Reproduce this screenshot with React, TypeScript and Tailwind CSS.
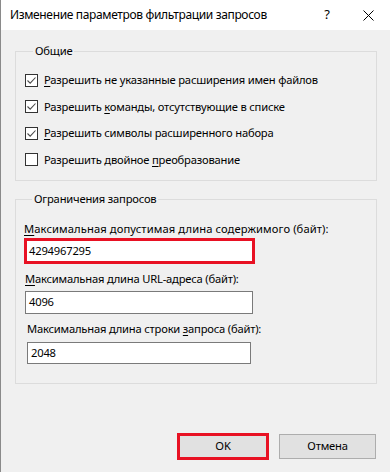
import React from 'react';

const FONT = { fontFamily: '"Noto Sans", "Open Sans", sans-serif' };

const Check: React.FC<{ checked: boolean }> = ({ checked }) => (
  <span className="w-[13px] h-[13px] border border-[#333333] bg-white flex items-center justify-center shrink-0">
    {checked && (
      <svg width="11" height="11" viewBox="0 0 11 11">
        <path d="M1.5 5.5 L4.2 8.2 L9.5 2.5" fill="none" stroke="#4a4a4a" strokeWidth="1.1" />
      </svg>
    )}
  </span>
);

const OPTIONS: { before: string; key: string; after: string; checked: boolean }[] = [
  { before: '', key: 'Р', after: 'азрешить не указанные расширения имен файлов', checked: true },
  { before: 'Разрешить ', key: 'к', after: 'оманды, отсутствующие в списке', checked: true },
  { before: '', key: 'Р', after: 'азрешить символы расширенного набора', checked: true },
  { before: 'Разрешить двойное ', key: 'п', after: 'реобразование', checked: false },
];

const App: React.FC = () => {
  return (
    <div className="w-[390px] h-[472px] bg-[#f0f0f0] border-l border-[#8a8a8a] text-[11.2px] tracking-[-0.2px] text-black flex flex-col overflow-hidden" style={FONT}>
      {/* Title bar */}
      <div className="h-[30px] bg-white flex items-center shrink-0">
        <span className="ml-[9px] flex-1 text-[12px] tracking-[-0.35px]">Изменение параметров фильтрации запросов</span>
        <span className="w-[20px] text-center text-[13px] mr-[26px]">?</span>
        <svg width="11" height="11" viewBox="0 0 11 11" className="mr-[16px]">
          <path d="M0.5 0.5 L10.5 10.5 M10.5 0.5 L0.5 10.5" stroke="#000" strokeWidth="1" />
        </svg>
      </div>

      {/* Общие */}
      <fieldset className="mt-[13px] ml-[14px] w-[362px] h-[138px] border border-[#dcdcdc] pl-[9px]">
        <legend className="ml-[8px] px-[2px] leading-[16px]">Общие</legend>
        <div className="pt-[8px] flex flex-col">
          {OPTIONS.map((o, i) => (
            <div key={i} className="h-[26.5px] flex items-center gap-[6px]">
              <Check checked={o.checked} />
              <span className="leading-[16px]">
                {o.before}
                <span className="underline underline-offset-2">{o.key}</span>
                {o.after}
              </span>
            </div>
          ))}
        </div>
      </fieldset>

      {/* Ограничения запросов */}
      <fieldset className="mt-[10px] ml-[14px] w-[362px] h-[193px] border border-[#dcdcdc] pl-[8px]">
        <legend className="ml-[8px] px-[2px] leading-[16px]">Ограничения запросов</legend>
        <div className="pt-[14px] flex flex-col">
          <div className="leading-[16px] tracking-[0.1px]">
            <span className="underline underline-offset-2">М</span>аксимальная допустимая длина содержимого (байт):
          </div>
          <div className="mt-[1px] w-[231px] h-[26px] border-[3px] border-[#e81123] bg-white flex items-center pl-[2px]">
            4294967295
          </div>
          <div className="mt-[7px] leading-[16px] ml-[1px]">
            <span className="underline underline-offset-2">М</span>аксимальная длина URL-адреса (байт):
          </div>
          <div className="mt-[4px] ml-[1px] w-[228px] h-[23px] border border-[#7a7a7a] bg-white flex items-center pl-[3px]">
            4096
          </div>
          <div className="mt-[7px] leading-[16px] ml-[3px]">
            Максимальная длина строки <span className="underline underline-offset-2">з</span>апроса (байт):
          </div>
          <div className="mt-[5px] ml-[3px] w-[224px] h-[22px] border border-[#7a7a7a] bg-white flex items-center pl-[3px]">
            2048
          </div>
        </div>
      </fieldset>

      {/* Buttons */}
      <div className="mt-[49px] flex items-start ml-[176px] gap-[10px]">
        <div className="w-[92px] h-[27px] border-[3px] border-[#e81123] bg-[#e1e1e1] flex items-center justify-center">
          OK
        </div>
        <div className="mt-[1px] w-[97px] h-[25px] border border-[#adadad] bg-[#e1e1e1] flex items-center justify-center">
          Отмена
        </div>
      </div>
    </div>
  );
};

export default App;
